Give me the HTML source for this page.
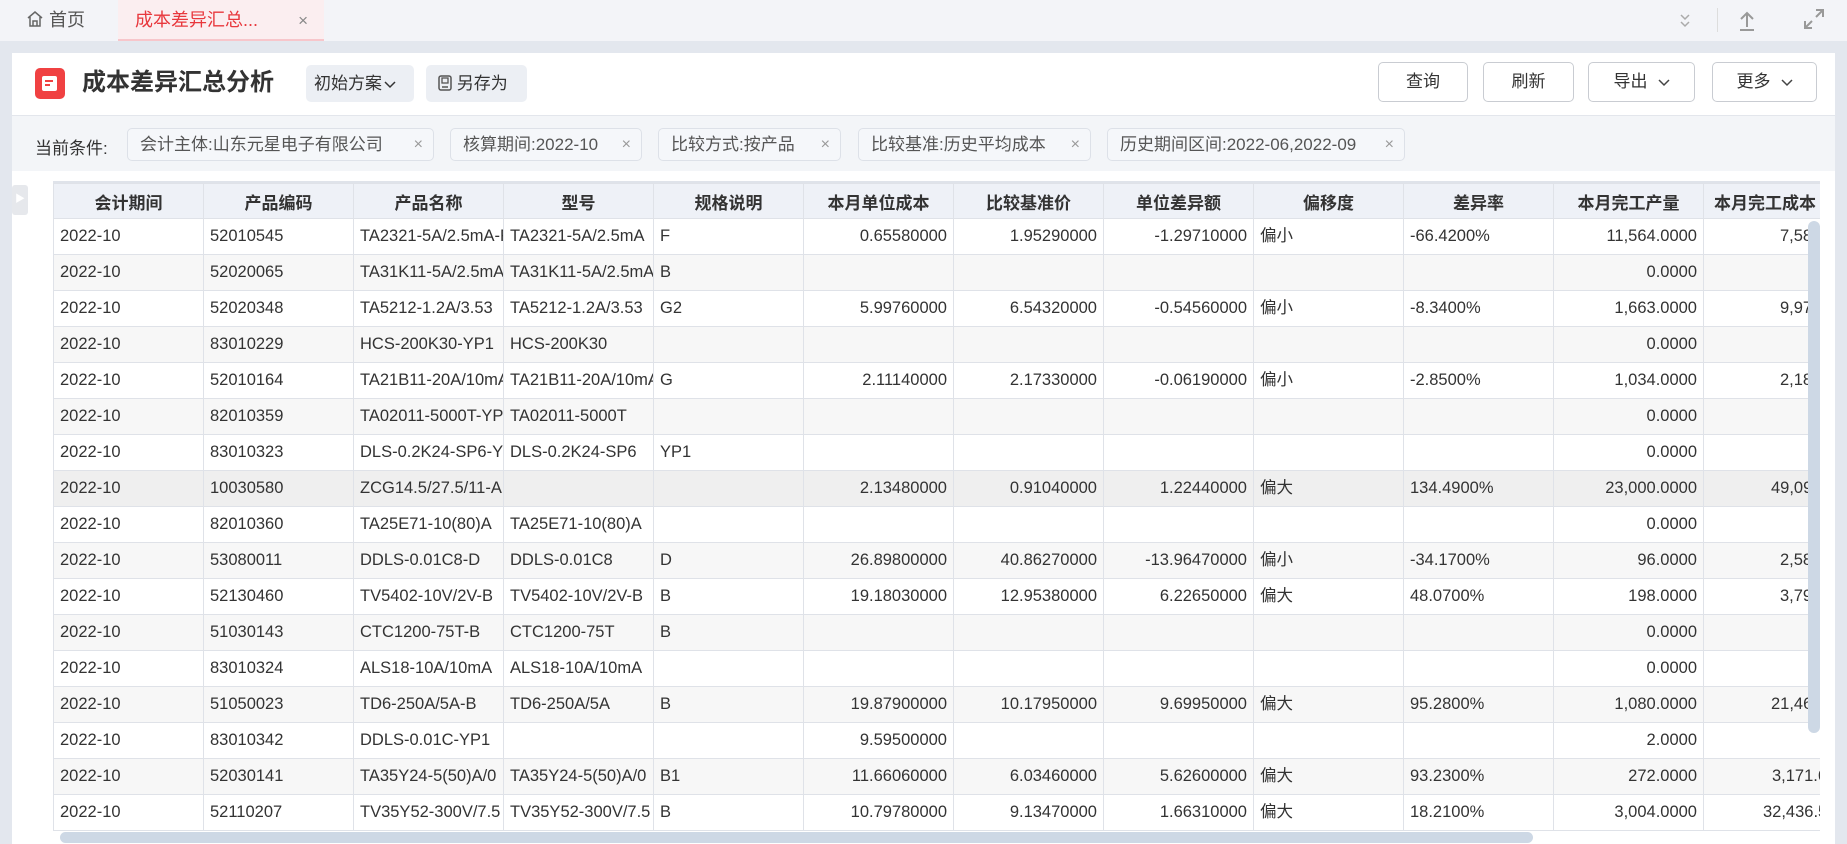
<!DOCTYPE html>
<html><head><meta charset="utf-8"><style>
*{box-sizing:border-box;margin:0;padding:0}
body{width:1847px;height:844px;overflow:hidden;background:#e3e7ee;font-family:"Liberation Sans","Noto Sans CJK SC",sans-serif;color:#333;position:relative}
.tabbar{position:absolute;left:0;top:0;width:1847px;height:41px;background:#f3f4f8}
.tab{position:absolute;top:0;height:41px;line-height:41px;font-size:18px}
.panel{position:absolute;left:12px;top:53px;width:1823px;height:791px;background:#fff}
.btn{position:absolute;height:40px;line-height:38px;border:1px solid #c9ccd2;border-radius:5px;text-align:center;font-size:17px;color:#333;background:#fff}
.gbtn{position:absolute;top:12px;height:37px;line-height:37px;background:#eceff4;border-radius:5px;font-size:17px;padding-left:8px}
.cond{position:absolute;left:0;top:62px;width:1823px;height:56px;background:#f3f5f8;border-top:1px solid #e3e6ec}
.tag{position:absolute;top:12px;height:33px;line-height:31px;border:1px solid #dde1e8;border-radius:5px;background:#f5f7fa;font-size:17px;color:#555;padding-left:12px}
.tag i{font-style:normal;color:#999;position:absolute;right:10px;font-size:16px}
.card{position:absolute;left:41px;top:173px;width:1791px;height:671px;background:#fff;border-radius:4px}
.tw{position:absolute;left:53px;top:181px;width:1767px;height:650px;overflow:hidden;border-top:2px solid #dfe3ea}
table{border-collapse:collapse;table-layout:fixed;width:1800px;font-size:16.5px}
td,th{border:1px solid #dfe2e8;height:36px;padding:0 6px;white-space:nowrap;overflow:hidden}
th{height:35px;background:#eef1f7;font-weight:bold;font-size:17px;color:#333;text-align:center}
td.r{text-align:right}
tr:nth-child(odd) td{background:#f7f7f7}
tr.h td{background:#efefef}
.c{position:relative;top:-3px}
.lc{padding-left:76px}
.chev{display:inline-block;vertical-align:middle;margin-left:10px}
</style></head><body>
<div class="tabbar">
 <div class="tab" style="left:26px;color:#555"><svg width="18" height="18" viewBox="0 0 18 18" style="vertical-align:-2px"><path d="M2 8 L9 2 L16 8 M4 7 V16 H14 V7 M7 16 V11 H11 V16" fill="none" stroke="#666" stroke-width="1.5"/></svg> 首页</div>
 <div class="tab" style="left:118px;width:206px;background:#fbeef0;color:#e8383d;padding-left:17px;border-bottom:2px solid #f7c6cb">成本差异汇总...<span style="position:absolute;right:16px;color:#888;font-size:17px">×</span></div>
 <svg style="position:absolute;left:1678px;top:12px" width="14" height="18" viewBox="0 0 14 18"><path d="M3 3 L7 7 L11 3 M3 10 L7 14 L11 10" fill="none" stroke="#aaa" stroke-width="1.5"/></svg>
 <div style="position:absolute;left:1717px;top:8px;width:1px;height:24px;background:#ddd"></div>
 <svg style="position:absolute;left:1737px;top:10px" width="20" height="22" viewBox="0 0 20 22"><path d="M10 17 V3 M4 9 L10 3 L16 9 M3 20 H17" fill="none" stroke="#999" stroke-width="2"/></svg>
 <svg style="position:absolute;left:1803px;top:8px" width="22" height="22" viewBox="0 0 22 22"><path d="M13 2 H20 V9 M20 2 L13 9 M9 20 H2 V13 M2 20 L9 13" fill="none" stroke="#999" stroke-width="2"/></svg>
</div>
<div class="panel">
 <div style="position:absolute;left:23px;top:15px;width:30px;height:31px;background:#f04142;border-radius:5px"><div style="position:absolute;left:7px;top:8px;width:15px;height:15px;background:#fff;border-radius:2px"></div><div style="position:absolute;left:10px;top:12px;width:8px;height:2px;background:#f04142"></div><div style="position:absolute;left:10px;top:16px;width:5px;height:2px;background:#f04142"></div></div>
 <div style="position:absolute;left:70px;top:14px;font-size:24px;font-weight:bold;color:#333;line-height:31px">成本差异汇总分析</div>
 <div class="gbtn" style="left:294px;width:108px">初始方案<svg width="12" height="8" viewBox="0 0 12 8" style="margin-left:2px"><path d="M1 1 L6 6 L11 1" fill="none" stroke="#333" stroke-width="1.5"/></svg></div>
 <div class="gbtn" style="left:414px;width:101px;padding-left:12px"><svg width="14" height="16" viewBox="0 0 14 16" style="vertical-align:-2px"><rect x="1" y="1" width="12" height="14" rx="2" fill="none" stroke="#555" stroke-width="1.5"/><rect x="4" y="3" width="6" height="5" fill="none" stroke="#555" stroke-width="1.3"/><path d="M4 12 H10" stroke="#555" stroke-width="1.5"/></svg> 另存为</div>
 <div class="btn" style="left:1366px;top:9px;width:90px">查询</div>
 <div class="btn" style="left:1471px;top:9px;width:91px">刷新</div>
 <div class="btn" style="left:1576px;top:9px;width:107px">导出<svg class="chev" width="12" height="8" viewBox="0 0 12 8"><path d="M1 1 L6 6 L11 1" fill="none" stroke="#444" stroke-width="1.5"/></svg></div>
 <div class="btn" style="left:1700px;top:9px;width:105px">更多<svg class="chev" width="12" height="8" viewBox="0 0 12 8"><path d="M1 1 L6 6 L11 1" fill="none" stroke="#444" stroke-width="1.5"/></svg></div>
 <div class="cond">
  <div style="position:absolute;left:23px;top:18px;font-size:17px;color:#333">当前条件:</div>
  <div class="tag" style="left:115px;width:307px">会计主体:山东元星电子有限公司<i>×</i></div>
  <div class="tag" style="left:438px;width:192px">核算期间:2022-10<i>×</i></div>
  <div class="tag" style="left:646px;width:183px">比较方式:按产品<i>×</i></div>
  <div class="tag" style="left:846px;width:233px">比较基准:历史平均成本<i>×</i></div>
  <div class="tag" style="left:1095px;width:298px">历史期间区间:2022-06,2022-09<i>×</i></div>
 </div>
</div>
<div class="card"></div>
<div style="position:absolute;left:12px;top:185px;width:16px;height:30px;background:#e6e8ec;border-radius:3px;color:#fff;font-size:10px;line-height:30px;text-align:center">▶</div>
<div class="tw"><table>
<colgroup><col width="150"><col width="150"><col width="150"><col width="150"><col width="150"><col width="150"><col width="150"><col width="150"><col width="150"><col width="150"><col width="150"><col width="150"></colgroup>
<tr><th style="background:#eef1f7">会计期间</th><th>产品编码</th><th>产品名称</th><th>型号</th><th>规格说明</th><th>本月单位成本</th><th>比较基准价</th><th>单位差异额</th><th>偏移度</th><th>差异率</th><th>本月完工产量</th><th style="text-align:left;padding-left:10px">本月完工成本</th></tr>
<tr><td>2022-10</td><td>52010545</td><td>TA2321-5A/2.5mA-F</td><td>TA2321-5A/2.5mA</td><td>F</td><td class="r">0.65580000</td><td class="r">1.95290000</td><td class="r">-1.29710000</td><td><span class="c">偏小</span></td><td>-66.4200%</td><td class="r">11,564.0000</td><td class="lc">7,584.6700</td></tr>
<tr><td>2022-10</td><td>52020065</td><td>TA31K11-5A/2.5mA</td><td>TA31K11-5A/2.5mA</td><td>B</td><td></td><td></td><td></td><td></td><td></td><td class="r">0.0000</td><td></td></tr>
<tr><td>2022-10</td><td>52020348</td><td>TA5212-1.2A/3.53</td><td>TA5212-1.2A/3.53</td><td>G2</td><td class="r">5.99760000</td><td class="r">6.54320000</td><td class="r">-0.54560000</td><td><span class="c">偏小</span></td><td>-8.3400%</td><td class="r">1,663.0000</td><td class="lc">9,974.0100</td></tr>
<tr><td>2022-10</td><td>83010229</td><td>HCS-200K30-YP1</td><td>HCS-200K30</td><td></td><td></td><td></td><td></td><td></td><td></td><td class="r">0.0000</td><td></td></tr>
<tr><td>2022-10</td><td>52010164</td><td>TA21B11-20A/10mA</td><td>TA21B11-20A/10mA</td><td>G</td><td class="r">2.11140000</td><td class="r">2.17330000</td><td class="r">-0.06190000</td><td><span class="c">偏小</span></td><td>-2.8500%</td><td class="r">1,034.0000</td><td class="lc">2,183.1900</td></tr>
<tr><td>2022-10</td><td>82010359</td><td>TA02011-5000T-YP</td><td>TA02011-5000T</td><td></td><td></td><td></td><td></td><td></td><td></td><td class="r">0.0000</td><td></td></tr>
<tr><td>2022-10</td><td>83010323</td><td>DLS-0.2K24-SP6-YP1</td><td>DLS-0.2K24-SP6</td><td>YP1</td><td></td><td></td><td></td><td></td><td></td><td class="r">0.0000</td><td style="padding-left:131px">65.21</td></tr>
<tr class="h"><td>2022-10</td><td>10030580</td><td>ZCG14.5/27.5/11-A</td><td></td><td></td><td class="r">2.13480000</td><td class="r">0.91040000</td><td class="r">1.22440000</td><td><span class="c">偏大</span></td><td>134.4900%</td><td class="r">23,000.0000</td><td style="padding-left:67px">49,098.4000</td></tr>
<tr><td>2022-10</td><td>82010360</td><td>TA25E71-10(80)A</td><td>TA25E71-10(80)A</td><td></td><td></td><td></td><td></td><td></td><td></td><td class="r">0.0000</td><td></td></tr>
<tr><td>2022-10</td><td>53080011</td><td>DDLS-0.01C8-D</td><td>DDLS-0.01C8</td><td>D</td><td class="r">26.89800000</td><td class="r">40.86270000</td><td class="r">-13.96470000</td><td><span class="c">偏小</span></td><td>-34.1700%</td><td class="r">96.0000</td><td class="lc">2,582.2100</td></tr>
<tr><td>2022-10</td><td>52130460</td><td>TV5402-10V/2V-B</td><td>TV5402-10V/2V-B</td><td>B</td><td class="r">19.18030000</td><td class="r">12.95380000</td><td class="r">6.22650000</td><td><span class="c">偏大</span></td><td>48.0700%</td><td class="r">198.0000</td><td class="lc">3,797.7000</td></tr>
<tr><td>2022-10</td><td>51030143</td><td>CTC1200-75T-B</td><td>CTC1200-75T</td><td>B</td><td></td><td></td><td></td><td></td><td></td><td class="r">0.0000</td><td></td></tr>
<tr><td>2022-10</td><td>83010324</td><td>ALS18-10A/10mA</td><td>ALS18-10A/10mA</td><td></td><td></td><td></td><td></td><td></td><td></td><td class="r">0.0000</td><td></td></tr>
<tr><td>2022-10</td><td>51050023</td><td>TD6-250A/5A-B</td><td>TD6-250A/5A</td><td>B</td><td class="r">19.87900000</td><td class="r">10.17950000</td><td class="r">9.69950000</td><td><span class="c">偏大</span></td><td>95.2800%</td><td class="r">1,080.0000</td><td style="padding-left:67px">21,469.3200</td></tr>
<tr><td>2022-10</td><td>83010342</td><td>DDLS-0.01C-YP1</td><td></td><td></td><td class="r">9.59500000</td><td></td><td></td><td></td><td></td><td class="r">2.0000</td><td style="padding-left:122px">19.19</td></tr>
<tr><td>2022-10</td><td>52030141</td><td>TA35Y24-5(50)A/0</td><td>TA35Y24-5(50)A/0</td><td>B1</td><td class="r">11.66060000</td><td class="r">6.03460000</td><td class="r">5.62600000</td><td><span class="c">偏大</span></td><td>93.2300%</td><td class="r">272.0000</td><td style="padding-left:68px">3,171.6800</td></tr>
<tr><td>2022-10</td><td>52110207</td><td>TV35Y52-300V/7.5</td><td>TV35Y52-300V/7.5</td><td>B</td><td class="r">10.79780000</td><td class="r">9.13470000</td><td class="r">1.66310000</td><td><span class="c">偏大</span></td><td>18.2100%</td><td class="r">3,004.0000</td><td style="padding-left:59px">32,436.5900</td></tr>
</table></div>
<div style="position:absolute;left:1808px;top:221px;width:12px;height:512px;background:#cdd8e5;border-radius:6px"></div>
<div style="position:absolute;left:60px;top:832px;width:1473px;height:11px;background:#cdd8e5;border-radius:6px"></div>
</body></html>
